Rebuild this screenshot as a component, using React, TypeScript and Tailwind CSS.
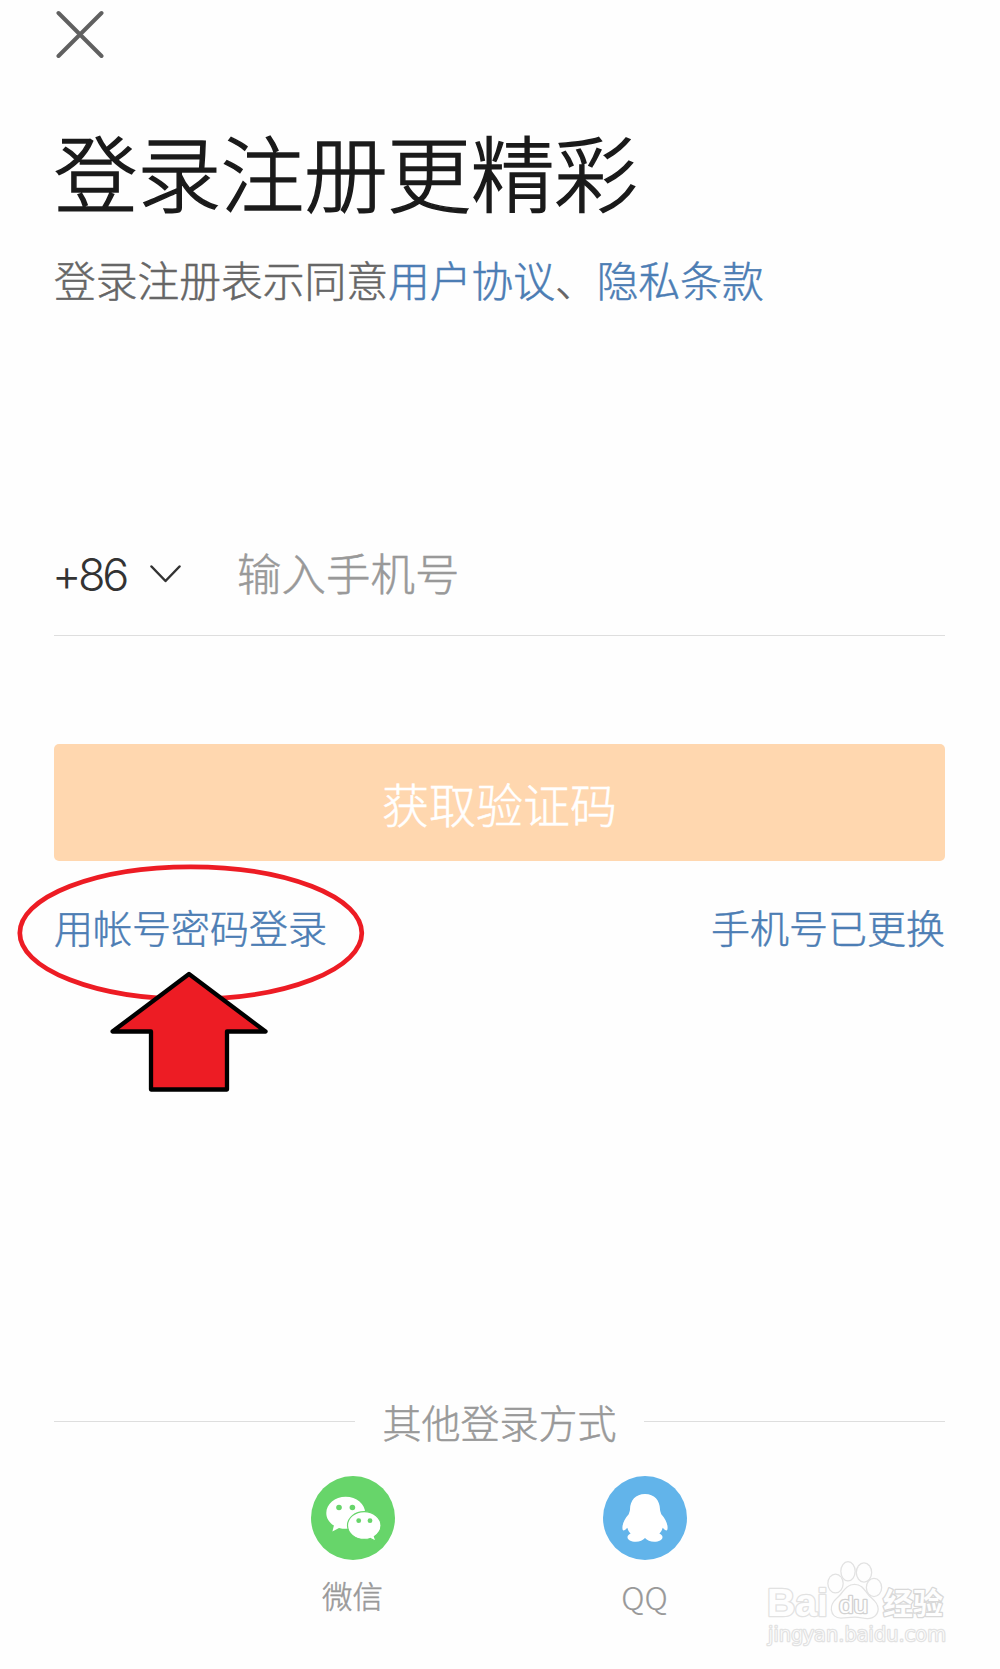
import React from 'react';

const WechatIcon: React.FC = (): JSX.Element => (
  <svg className="w-[84px] h-[84px]" viewBox="0 0 84 84">
    <circle cx="42" cy="42" r="42" fill="#67d56a" />
    <path
      d="M34.7 20.7c-10.8 0-19.4 7.3-19.4 16.3 0 5.200 2.700 9.500 7.600 12.600l-1.500 6 6.600-3.700c2.200.700 4.400.900 6.700.900 10.800 0 19.500-7.100 19.500-15.800 0-9-8.700-16.300-19.500-16.300z"
      fill="#fff"
    />
    <circle cx="28" cy="31.500" r="2.800" fill="#67d56a" />
    <circle cx="41.400" cy="31.500" r="2.800" fill="#67d56a" />
    <path
      d="M53.200 35.600c-9.200 0-16.700 6.200-16.700 13.900s7.500 13.900 16.700 13.900c2.200 0 4.300-.300 6-.900l5.700 2.800-1.500-4.800c4.200-2.800 6.600-6.600 6.600-11 0-7.700-7.600-13.900-16.800-13.900z"
      fill="#fff"
      stroke="#67d56a"
      strokeWidth="1.200"
    />
    <circle cx="47.700" cy="44.700" r="2.400" fill="#67d56a" />
    <circle cx="59" cy="44.700" r="2.400" fill="#67d56a" />
  </svg>
);

const QQIcon: React.FC = (): JSX.Element => (
  <svg className="w-[84px] h-[84px]" viewBox="0 0 84 84">
    <circle cx="42" cy="42" r="42" fill="#62b4ea" />
    <path
      d="M42 18c-9.500 0-14.800 6.600-15 15.200 0 2-.8 3-1.300 5.100-3.800 4.200-6.300 9.500-6.300 13.300 0 2 .4 2.900 1.100 2.900 1 0 2.500-1.100 3.800-2.700.6 2.200 1.700 4.200 3.300 6-2 .6-3.100 1.900-3.100 3.500 0 2.700 3.500 4.500 8.300 4.500 4 0 7.100-1.300 9.200-3.700 2.100 2.400 5.200 3.700 9.200 3.700 4.800 0 8.300-1.800 8.300-4.500 0-1.600-1.100-2.900-3.100-3.500 1.600-1.800 2.700-3.800 3.300-6 1.300 1.600 2.800 2.700 3.800 2.700.700 0 1.100-.900 1.100-2.900 0-3.800-2.500-9.100-6.300-13.300-.5-2.100-1.300-3.100-1.300-5.100C56.800 24.600 51.500 18 42 18z"
      fill="#fff"
    />
  </svg>
);

const Marker: React.FC = (): JSX.Element => (
  <svg className="absolute left-0 top-[850px] w-[400px] h-[260px] pointer-events-none" viewBox="0 850 400 260">
    <ellipse cx="190.800" cy="933" rx="171" ry="66.200" fill="none" stroke="#ed1c24" strokeWidth="4.700" />
    <path
      d="M189 974l76.500 57.500H227v58h-76v-58h-38.500z"
      fill="#ed1c24"
      stroke="#000"
      strokeWidth="4.300"
      strokeLinejoin="round"
    />
  </svg>
);

const Watermark: React.FC = (): JSX.Element => (
  <svg
    className="absolute left-[750px] top-[1540px] w-[250px] h-[129px] pointer-events-none [paint-order:stroke]"
    viewBox="0 0 250 129"
    fill="#fefefe"
    stroke="#e2e2e2"
    strokeWidth="2.600"
    strokeLinejoin="round"
  >
    <text x="17" y="76" fontSize="38" fontWeight="bold" textLength="61" lengthAdjust="spacingAndGlyphs" className="font-['Liberation_Sans',sans-serif]">Bai</text>
    <g strokeWidth="2.600">
      <ellipse cx="85.500" cy="43.500" rx="7" ry="8.800" />
      <ellipse cx="98" cy="31.300" rx="6.500" ry="9" />
      <ellipse cx="114" cy="32.500" rx="7" ry="9" />
      <ellipse cx="124" cy="47.500" rx="7" ry="8.500" />
      <path d="M104.500 45c-8 0-11 8-16 12.500-4 3.500-7 7-6.500 12 .500 5 4 8 9 8 5 0 8-1 13.500-1s9 1.500 13 1.500c6 0 10-4 10-9 0-6-5-9-8.500-12.500C114.500 51.500 112 45 104.500 45z" />
    </g>
    <text x="89" y="73" fontSize="24" textLength="29" lengthAdjust="spacingAndGlyphs" stroke="#d2d2d2" className="font-['Liberation_Sans',sans-serif]">du</text>
    <text x="133" y="74" fontSize="30" fontWeight="bold" stroke="#d8d8d8" className="font-['Noto_Sans_CJK_SC',sans-serif]">经验</text>
    <text x="18" y="101" fontSize="19" textLength="178" lengthAdjust="spacingAndGlyphs" className="font-['DejaVu_Sans',sans-serif]">jingyan.baidu.com</text>
  </svg>
);

export default function App() {
  return (
    <div className="relative w-[1000px] h-[1669px] overflow-hidden bg-[#fefefe] px-[54px] pt-[10px] font-['Noto_Sans_CJK_SC',sans-serif] font-light [-webkit-text-stroke:0.5px]">
      <button className="block ml-[2px]">
        <svg className="w-12 h-12" viewBox="0 0 48 48" fill="none" stroke="#606060" strokeWidth="4" strokeLinecap="round">
          <path d="M2.500 3l43 43M45.500 3L2.500 46" />
        </svg>
      </button>

      <h1 className="mt-[62px] h-[100px] leading-[100px] text-[83.400px] text-[#1a1a1a] whitespace-nowrap [-webkit-text-stroke:1.500px]">登录注册更精彩</h1>
      <p className="mt-[29px] h-[60px] leading-[60px] text-[41.750px] text-[#666] whitespace-nowrap">
        登录注册表示同意<a className="text-[#4c7db4]">用户协议</a>、<a className="text-[#4c7db4]">隐私条款</a>
      </p>

      <div className="mt-[198px] h-[129px] w-[891px] flex items-center border-b border-[#dedede]">
        <span className="-ml-[2px] w-[97px] pt-[7px] text-[45px] tracking-[-3.300px] text-[#333] font-['Inter',sans-serif] [-webkit-text-stroke:0px]">+86</span>
        <svg className="mt-[5px] w-[32px] h-[20px]" viewBox="0 0 32 20" fill="none" stroke="#333" strokeWidth="2.500" strokeLinecap="round" strokeLinejoin="round">
          <path d="M2.500 2.500L16.500 17 30.500 2.500" />
        </svg>
        <span className="ml-[56px] pt-[2px] text-[44.500px] text-[#999]">输入手机号</span>
      </div>

      <button className="mt-[108px] block w-[891px] h-[117px] rounded-[5px] bg-[#ffd7af] text-[47px] leading-[112px] text-white">
        获取验证码
      </button>

      <div className="mt-[34px] h-[62px] w-[891px] flex items-center justify-between text-[39px] text-[#4c7db4]">
        <a>用帐号密码登录</a>
        <a>手机号已更换</a>
      </div>

      <div className="mt-[433px] h-[62px] w-[891px] flex items-center justify-between text-[39px] text-[#999]">
        <span className="w-[301px] h-px bg-[#dedede]" />
        <span>其他登录方式</span>
        <span className="w-[301px] h-px bg-[#dedede]" />
      </div>

      <div className="mt-[24px] flex justify-center gap-[208px] w-[889px] text-[30.500px] leading-[44px] text-[#999]">
        <div className="flex flex-col items-center w-[84px]">
          <WechatIcon />
          <span className="mt-[13px]">微信</span>
        </div>
        <div className="flex flex-col items-center w-[84px]">
          <QQIcon />
          <span className="mt-[14px] text-[32px] [-webkit-text-stroke:0.2px]">QQ</span>
        </div>
      </div>

      <Marker />
      <Watermark />
    </div>
  );
}
